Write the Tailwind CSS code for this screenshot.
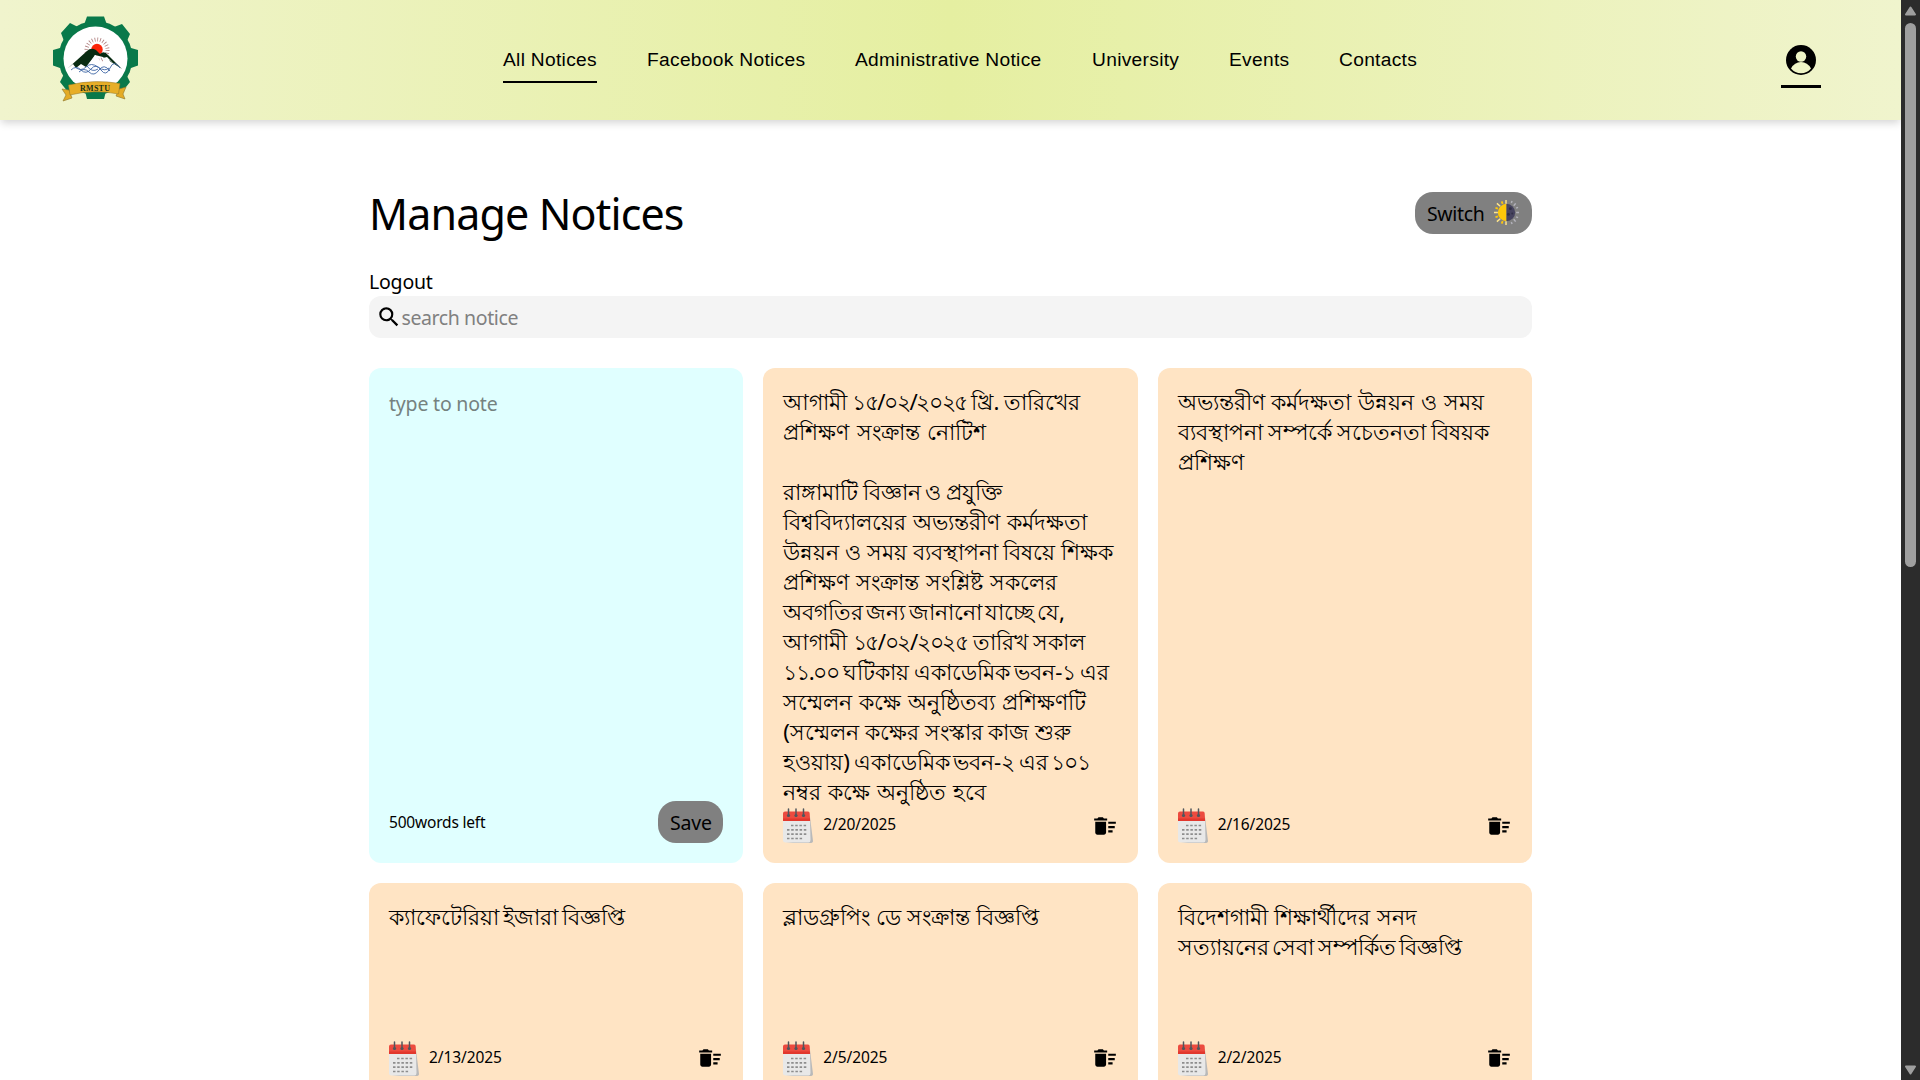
<!DOCTYPE html>
<html lang="en">
<head>
<meta charset="utf-8">
<title>Manage Notices</title>
<script src="https://cdn.jsdelivr.net/npm/@tailwindcss/browser@4"></script>
</head>
<body class="h-[1080px] overflow-hidden bg-white text-black font-['Noto_Sans',sans-serif]">
<svg class="hidden">
  <symbol id="cal" viewBox="0 0 30 35">
    <path d="M25 7l2 2 3 24q0 2-3 2H3l21-3z" fill="#b9b9b9"/>
    <path d="M0 12h27l.5 20q0 2.500-2 2.500H2.500Q0 34.500 0 32z" fill="#e8e8e8"/>
    <path d="M0 5.500Q0 3.500 2 3.500h23q1.700 0 1.700 2l.4 7.500H0z" fill="#ec4b3f"/>
    <path d="M0 10.500h27v2.500H0z" fill="#e2372d"/>
    <g stroke="#50565c" stroke-width="1.500" stroke-linecap="round"><path d="M5.500 1v7M13 1v7M20.500 1v7"/></g>
    <g fill="#50565c"><circle cx="5.500" cy="7.500" r="1.600"/><circle cx="13" cy="7.500" r="1.600"/><circle cx="20.500" cy="7.500" r="1.600"/></g>
    <g stroke="#8d8d8d" stroke-width="1.700" stroke-dasharray="2.500 1.700"><path d="M8 17.500h15.500M4 21.800h19.500M4 26.200h19.500M4 30.500h15.500"/></g>
  </symbol>
  <symbol id="sweep" viewBox="0 0 24 24"><path d="M15 16h4v2h-4zm0-8h7v2h-7zm0 4h6v2h-6zM3 18c0 1.100.9 2 2 2h6c1.100 0 2-.9 2-2V8H3v10zM14 5h-3l-1-1H6L5 5H2v2h12z"/></symbol>
</svg>
<div class="flex h-[1080px]">
  <div class="w-[1901px] shrink-0 overflow-hidden">
    <header class="flex h-[120px] items-start bg-[linear-gradient(90deg,#f0f4cd,#e5efa1_50%,#f0f4cd)] shadow-[0_4px_8px_-1px_rgba(0,0,0,0.17)]">
      <svg class="ml-[53px] mt-4 h-[88px] w-[85px] shrink-0" viewBox="0 0 85 88">
        <g fill="#09794a">
          <circle cx="42.500" cy="42" r="37"/>
          <path d="M34 0.500h17l2.500 7h-22zM34 83h17l2-8H32z"/>
          <path d="M0 34l7-2v20l-7-2.500zM85 34l-7-2v20l7-2.500z"/>
          <path d="M8 17L17 7l8 4L11 25zM77 18L69 8l-8 3 13 14zM7 66l8 10 10-5L11 58zM77 66l-8 10-10-5 14-13z"/>
        </g>
        <circle cx="42.500" cy="42.500" r="32" fill="#fff"/>
        <circle cx="44" cy="34" r="10.500" fill="none" stroke="#b08080" stroke-width="4" stroke-dasharray="0.800 1.950"/>
        <circle cx="44" cy="33.500" r="5.700" fill="#fb2408"/>
        <path d="M14 53L34 35q4-4 9-1l4 4q4-4 8 1l14 14-11-7-8-5-8-2-9 12-5-3-5 4-3-4z" fill="#082b12"/>
        <path d="M42 39l4 4 4 7-7-2-6 2zM50 42l9 7-3-5 5 4-7-7z" fill="#fff"/>
        <path d="M18 54q5-5 10 0t10-1 10 1 9-2 10 0M26 56q5-5 10 0t10-2 11 1M22 51q6 5 11 0t12 0 11 1M34 50q5 7 11 3" fill="none" stroke="#3e67a5" stroke-width=".9"/>
        <path d="M9 73l7 1 3 8-9 3 3-6zM73 71l-7 2-3 7 9 3-2-5z" fill="#e4ab25" stroke="#8c7328" stroke-width=".6"/>
        <path d="M15.500 69Q41 63 67 67.500L65.500 78Q41 73 17 79z" fill="#e7ae27" stroke="#8c7328" stroke-width=".5"/>
        <text x="42" y="75" text-anchor="middle" textLength="30" font-size="8" class="font-['Liberation_Serif',serif] font-bold" fill="#173118">RMSTU</text>
      </svg>
      <nav class="ml-[365px] mt-[44px] flex gap-[50px] whitespace-nowrap text-[19.2px] leading-[32px] tracking-[0.3px] font-['Liberation_Sans',sans-serif]">
        <a class="h-[39px] w-[94px] border-b-2 border-black">All Notices</a>
        <a class="w-[158px]">Facebook Notices</a>
        <a class="w-[187px]">Administrative Notice</a>
        <a class="w-[87px]">University</a>
        <a class="w-[60px]">Events</a>
        <a class="w-[78px]">Contacts</a>
      </nav>
      <div class="ml-[364px] mt-[45px] flex h-[43px] w-10 justify-center border-b-[3px] border-black">
        <svg class="size-[30px]" viewBox="0 0 30 30"><circle cx="15" cy="15" r="15"/><circle cx="15" cy="11.500" r="5.200" fill="#eef4c6"/><path d="M5 23.500Q8.500 17 15 17t10 6.500Q21 28.300 15 28.300T5 23.500z" fill="#eef4c6"/></svg>
      </div>
    </header>

    <main class="ml-[369px] w-[1163px] pt-[72px]">
      <div class="flex h-[72px] items-start justify-between">
        <h1 class="-mt-[8px] whitespace-nowrap text-[43px] leading-[60px] tracking-[-0.85px]">Manage Notices</h1>
        <button class="flex h-[42px] w-[117px] items-center justify-between rounded-[18px] bg-[#808080] pl-[12px] pr-[13px] text-[19.5px] tracking-[-0.35px]">
          <span class="mt-[2px]">Switch</span>
          <svg class="-mt-[2px] size-[25px]" viewBox="0 0 26 26">
            <path d="M13 4a9 9 0 0 0 0 18z" fill="#fdc70a"/><path d="M13 4a9 9 0 0 1 0 18z" fill="#46435f"/>
            <g fill="#302f45"><circle cx="17" cy="9" r="1.500"/><circle cx="15" cy="15" r="1.500"/><circle cx="19" cy="14" r="1"/></g>
            <path d="M12.500 0v4M12.500 22v4M0 13h4M3 3.500l3.500 3M3 22.500l3.500-3" stroke="#ffe58a" stroke-width="1.500"/>
            <path d="M8 1.500l1 2.500M1.500 8L4 9M1.500 18L4 17M8 24.500L9 22" stroke="#fdc70a" stroke-width="1.800"/>
            <path d="M23 13h3M20.500 6l2-2.500M20.500 20l2 2.500M18 3l.8-2M23 8.500l2-.8M23 17.500l2 .8M18 23l.8 2" stroke="#b4b3bc" stroke-width="1.500"/>
          </svg>
        </button>
      </div>
      <div class="h-8 pt-[3px] text-[19.5px] leading-[30px] tracking-[-0.2px]"><a>Logout</a></div>
      <div class="flex h-[42px] items-center rounded-[12px] bg-[#f4f4f4] pl-[7px] text-[19.5px] tracking-[-0.4px] text-[#808080]">
        <svg class="-mt-[1px] size-[26px]" viewBox="0 0 24 24" fill="#000"><path d="M15.500 14h-.79l-.28-.27A6.471 6.471 0 0 0 16 9.500 6.500 6.500 0 1 0 9.500 16c1.610 0 3.090-.59 4.230-1.570l.27.28v.79l5 4.990L20.490 19l-4.990-5zm-6 0C7.010 14 5 11.990 5 9.500S7.010 5 9.500 5 14 7.010 14 9.500 11.990 14 9.500 14z"/></svg>
        <span class="-ml-[0.5px] mt-[2px]">search notice</span>
      </div>

      <section class="mt-[30px] grid grid-cols-3 grid-rows-[495px_213px] gap-5 text-[22.2px] leading-[30px]">
        <article class="flex flex-col justify-between rounded-[12px] bg-[#e0ffff] p-5">
          <p class="pt-[1px] text-[19.5px] tracking-[-0.2px] text-[#75827f]">type to note</p>
          <div class="flex h-[42px] items-center justify-between text-[15.500px]">
            <span class="tracking-[-0.2px]">500words left</span>
            <button class="h-[42px] w-[65px] rounded-[18px] bg-[#808080] pt-[2px] text-[19.5px] tracking-[-0.2px]">Save</button>
          </div>
        </article>
        <article class="flex flex-col justify-between rounded-[12px] bg-[#ffe4c4] p-5">
          <div class="-mt-[1px] h-[421px] whitespace-nowrap">
            <p class="[word-spacing:-1.2px]">আগামী <span class="tracking-[-1.35px]">১৫/০২/২০২৫</span> খ্রি. তারিখের</p>
            <p class="[word-spacing:1.5px]">প্রশিক্ষণ সংক্রান্ত নোটিশ</p>
            <br>
            <p class="[word-spacing:-1.2px]">রাঙ্গামাটি বিজ্ঞান ও প্রযুক্তি</p>
            <p class="[word-spacing:1px]">বিশ্ববিদ্যালয়ের অভ্যন্তরীণ কর্মদক্ষতা</p>
            <p>উন্নয়ন ও সময় ব্যবস্থাপনা বিষয়ে শিক্ষক</p>
            <p class="[word-spacing:1px]">প্রশিক্ষণ সংক্রান্ত সংশ্লিষ্ট সকলের</p>
            <p class="[word-spacing:-2.6px]">অবগতির জন্য জানানো যাচ্ছে যে,</p>
            <p class="[word-spacing:-0.6px]">আগামী <span class="tracking-[-1.35px]">১৫/০২/২০২৫</span> তারিখ সকাল</p>
            <p class="[word-spacing:-1.2px]"><span class="tracking-[-1.35px]">১১.০০</span> ঘটিকায় একাডেমিক ভবন-<span class="tracking-[-1.35px]">১</span> এর</p>
            <p class="[word-spacing:1px]">সম্মেলন কক্ষে অনুষ্ঠিতব্য প্রশিক্ষণটি</p>
            <p>(সম্মেলন কক্ষের সংস্কার কাজ শুরু</p>
            <p class="[word-spacing:-2.2px]">হওয়ায়) একাডেমিক ভবন-২ এর <span class="tracking-[-1px]">১০১</span></p>
            <p class="[word-spacing:1px]">নম্বর কক্ষে অনুষ্ঠিত হবে</p>
          </div>
          <footer class="flex h-[35px] items-center text-[15.500px] tracking-[-0.1px]"><svg class="h-[35px] w-[30px]"><use href="#cal"/></svg><span class="ml-[10px] -mt-[3px]">2/20/2025</span><svg class="ml-auto size-[26px]"><use href="#sweep"/></svg></footer>
        </article>
        <article class="flex flex-col justify-between rounded-[12px] bg-[#ffe4c4] p-5">
          <div class="-mt-[1px] whitespace-nowrap">
            <p class="[word-spacing:1px]">অভ্যন্তরীণ কর্মদক্ষতা উন্নয়ন ও সময়</p>
            <p class="[word-spacing:-0.5px]">ব্যবস্থাপনা সম্পর্কে সচেতনতা বিষয়ক</p>
            <p>প্রশিক্ষণ</p>
          </div>
          <footer class="flex h-[35px] items-center text-[15.500px] tracking-[-0.1px]"><svg class="h-[35px] w-[30px]"><use href="#cal"/></svg><span class="ml-[10px] -mt-[3px]">2/16/2025</span><svg class="ml-auto size-[26px]"><use href="#sweep"/></svg></footer>
        </article>
        <article class="flex flex-col justify-between rounded-[12px] bg-[#ffe4c4] p-5">
          <p class="-mt-[1px] whitespace-nowrap [word-spacing:-1.6px]">ক্যাফেটেরিয়া ইজারা বিজ্ঞপ্তি</p>
          <footer class="flex h-[35px] items-center text-[15.500px] tracking-[-0.1px]"><svg class="h-[35px] w-[30px]"><use href="#cal"/></svg><span class="ml-[10px] -mt-[3px]">2/13/2025</span><svg class="-mt-[1px] ml-auto size-[26px]"><use href="#sweep"/></svg></footer>
        </article>
        <article class="flex flex-col justify-between rounded-[12px] bg-[#ffe4c4] p-5">
          <p class="-mt-[1px] whitespace-nowrap">ব্লাডগ্রুপিং ডে সংক্রান্ত বিজ্ঞপ্তি</p>
          <footer class="flex h-[35px] items-center text-[15.500px] tracking-[-0.1px]"><svg class="h-[35px] w-[30px]"><use href="#cal"/></svg><span class="ml-[10px] -mt-[3px]">2/5/2025</span><svg class="-mt-[1px] ml-auto size-[26px]"><use href="#sweep"/></svg></footer>
        </article>
        <article class="flex flex-col justify-between rounded-[12px] bg-[#ffe4c4] p-5">
          <div class="-mt-[1px] whitespace-nowrap">
            <p class="[word-spacing:0.7px]">বিদেশগামী শিক্ষার্থীদের সনদ</p>
            <p class="[word-spacing:-2.2px]">সত্যায়নের সেবা সম্পর্কিত বিজ্ঞপ্তি</p>
          </div>
          <footer class="flex h-[35px] items-center text-[15.500px] tracking-[-0.1px]"><svg class="h-[35px] w-[30px]"><use href="#cal"/></svg><span class="ml-[10px] -mt-[3px]">2/2/2025</span><svg class="-mt-[1px] ml-auto size-[26px]"><use href="#sweep"/></svg></footer>
        </article>
      </section>
    </main>
  </div>
  <aside class="flex h-full w-[19px] shrink-0 flex-col items-center bg-[#2c2c2c]">
    <svg class="mt-[6px] h-[10px] w-[13px] shrink-0" viewBox="0 0 13 10"><path d="M6.500 1.500l4.500 7H2z" fill="#9f9f9f" stroke="#9f9f9f" stroke-width="2" stroke-linejoin="round"/></svg>
    <div class="mt-[7px] h-[544px] w-[11px] shrink-0 rounded-full bg-[#9f9f9f]"></div>
    <svg class="mt-auto mb-[5px] h-[10px] w-[13px] shrink-0" viewBox="0 0 13 10"><path d="M6.500 8.500l4.500-7H2z" fill="#9f9f9f" stroke="#9f9f9f" stroke-width="2" stroke-linejoin="round"/></svg>
  </aside>
</div>
</body>
</html>
